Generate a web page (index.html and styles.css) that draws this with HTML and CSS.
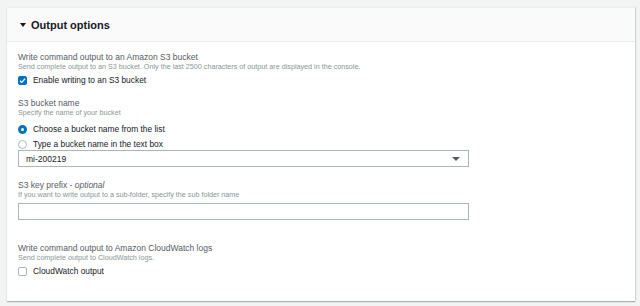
FILE: index.html
```html
<html lang="en">
<head>
    <meta charset="UTF-8">
    <meta name="viewport" content="width=device-width, initial-scale=1.0">
    <link rel="stylesheet" href="styles.css">
    <title>Output options</title>
</head>
<body>

    <section class="panel">
        <div class="panel-header">
            <span class="caret"></span>
            <h2>Output options</h2>
        </div>

        <div class="panel-body">
            <div class="field field-s3">
                <div class="field-label">Write command output to an Amazon S3 bucket</div>
                <div class="field-desc">Send complete output to an S3 bucket. Only the last 2500 characters of output are displayed in the console.</div>
                <label class="check-row">
                    <span class="checkbox checked">
                        <svg viewBox="0 0 10 10" width="9" height="9"><path d="M2.2 5.2 L4.2 7.1 L7.9 2.9" fill="none" stroke="#fff" stroke-width="1.5"/></svg>
                    </span>
                    Enable writing to an S3 bucket
                </label>
            </div>

            <div class="field field-bucket">
                <div class="field-label">S3 bucket name</div>
                <div class="field-desc">Specify the name of your bucket</div>
                <label class="radio-row first">
                    <span class="radio checked"></span>
                    Choose a bucket name from the list
                </label>
                <label class="radio-row">
                    <span class="radio"></span>
                    Type a bucket name in the text box
                </label>
                <div class="select">
                    <span>mi-200219</span>
                    <span class="select-arrow"></span>
                </div>
            </div>

            <div class="field field-prefix">
                <div class="field-label">S3 key prefix - <em>optional</em></div>
                <div class="field-desc">If you want to write output to a sub-folder, specify the sub folder name</div>
                <input class="text-input" type="text">
            </div>

            <div class="field field-logs">
                <div class="field-label">Write command output to Amazon CloudWatch logs</div>
                <div class="field-desc">Send complete output to CloudWatch logs.</div>
                <label class="check-row">
                    <span class="checkbox"></span>
                    CloudWatch output
                </label>
            </div>
        </div>
    </section>

</body>
</html>
```

FILE: styles.css
```css
body {
    background-color: #f2f3f3;
    margin: 0;
    padding: 7px 5px 0 7px;
    font-family: "Liberation Sans", Arial, sans-serif;
    color: #16191f;
}

.panel {
    background-color: #ffffff;
    border-top: 1px solid #eaeded;
    box-shadow: 0 1px 1px rgba(0, 28, 36, 0.3), 1px 0 1px rgba(0, 28, 36, 0.1);
}

.panel-header {
    height: 33px;
    background-color: #fafafa;
    border-bottom: 1px solid #eaeded;
    display: flex;
    align-items: center;
    padding-left: 13px;
}

.panel-header h2 {
    margin: 0;
    font-size: 11px;
    font-weight: bold;
    color: #16191f;
}

.caret {
    width: 0;
    height: 0;
    border-left: 3px solid transparent;
    border-right: 3px solid transparent;
    border-top: 4px solid #16191f;
    margin-right: 5px;
}

.panel-body {
    padding: 9px 11px 24px 11px;
}

.field-label {
    font-size: 8.5px;
    line-height: 12px;
    color: #545b64;
}

.field-label em {
    font-style: italic;
}

.field-desc {
    font-size: 7.2px;
    line-height: 8px;
    color: #879596;
}

.check-row,
.radio-row {
    display: flex;
    align-items: center;
    height: 12px;
    font-size: 8.4px;
    color: #16191f;
}

.check-row {
    margin-top: 3px;
}

.checkbox {
    width: 9px;
    height: 9px;
    box-sizing: border-box;
    border: 1px solid #aab7b8;
    border-radius: 2px;
    margin-right: 6px;
    display: flex;
}

.checkbox.checked {
    background-color: #0073bb;
    border-color: #0073bb;
}

.checkbox svg {
    margin: -1px;
}

.radio {
    width: 9px;
    height: 9px;
    box-sizing: border-box;
    border: 1px solid #aab7b8;
    border-radius: 50%;
    margin-right: 6px;
}

.radio.checked {
    border: 3px solid #0073bb;
}

.radio-row.first {
    margin-top: 6px;
}

.radio-row {
    margin-top: 3px;
}

.field-bucket {
    margin-top: 11px;
}

.select {
    width: 451px;
    height: 17px;
    box-sizing: border-box;
    border: 1px solid #aab7b8;
    display: flex;
    align-items: center;
    justify-content: space-between;
    padding: 0 8px 0 7px;
    font-size: 8.5px;
}

.select-arrow {
    width: 0;
    height: 0;
    border-left: 4px solid transparent;
    border-right: 4px solid transparent;
    border-top: 4px solid #545b64;
}

.field-prefix {
    margin-top: 12px;
}

.text-input {
    display: block;
    width: 451px;
    height: 17px;
    box-sizing: border-box;
    border: 1px solid #aab7b8;
    margin: 4px 0 0 0;
    padding: 0 7px;
}

.field-logs {
    margin-top: 22px;
}
```
